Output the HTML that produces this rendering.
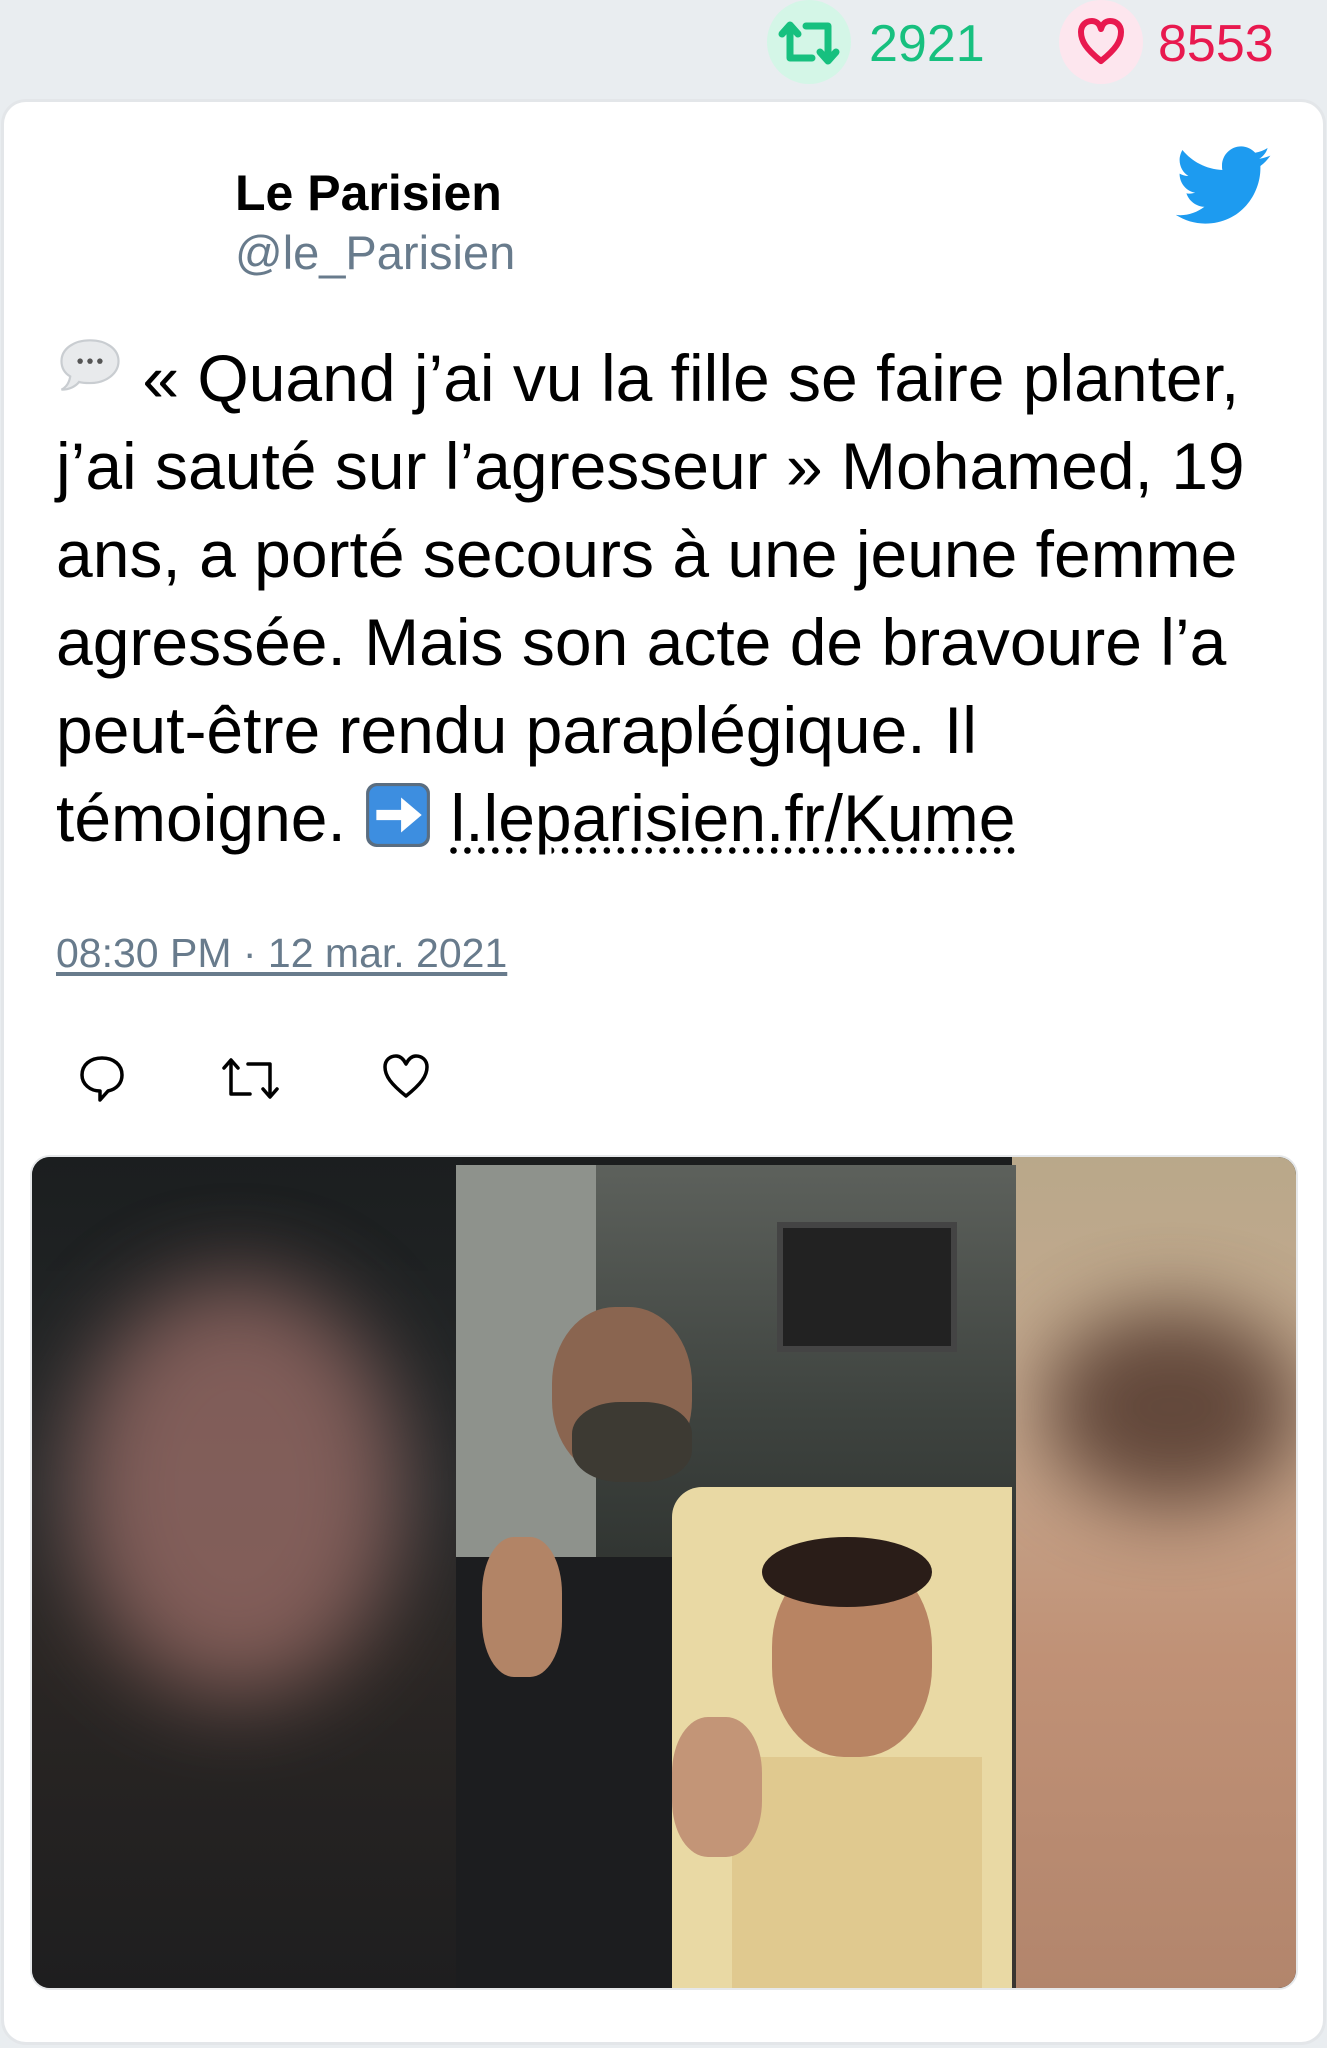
<!DOCTYPE html>
<html><head><meta charset="utf-8">
<style>
*{margin:0;padding:0;box-sizing:border-box}
html,body{width:1327px;height:2048px;overflow:hidden;background:#e9edf0;font-family:"Liberation Sans",Arial,sans-serif}
.top{position:absolute;top:0;left:0;width:1327px;height:100px}
.circ{position:absolute;width:84px;height:84px;border-radius:50%;top:0}
.num{position:absolute;top:14px;font-size:52px}
.card{position:absolute;left:4px;top:102px;width:1319px;height:1940px;background:#fff;border-radius:22px;box-shadow:0 0 0 3px #e3e6e9}
.handle{position:absolute;left:231px;font-size:47px;color:#687b8c}
.text{position:absolute;left:52px;width:1200px;font-size:66px;line-height:88px;color:#000}
.link{color:#000;text-decoration:underline dotted;text-underline-offset:6px}
.time{position:absolute;left:52px;font-size:41px;color:#687b8c;text-decoration:underline;text-underline-offset:5px}
.act{position:absolute}
.img{position:absolute;left:30px;top:1155px;width:1268px;height:835px;border-radius:20px;overflow:hidden;border:2px solid #e6e8ea;background:#1b1d1e}
</style></head><body>
<div class="top">
 <div class="circ" style="left:767px;background:#d4f6e7"></div>
 <svg style="position:absolute;left:778px;top:20px" width="62" height="46" viewBox="0 0 62 46"><g fill="none" stroke="#17c07f" stroke-width="7" stroke-linecap="round" stroke-linejoin="round"><path d="M4 14 L12 5 L20 14"/><path d="M12 6 V38 H34"/><path d="M28 6 H50 V38"/><path d="M42 32 L50 41 L58 32"/></g></svg>
 <div class="num" style="left:869px;color:#17c07f">2921</div>
 <div class="circ" style="left:1059px;background:#fde6ee"></div>
 <svg style="position:absolute;left:1076px;top:17px" width="50" height="50" viewBox="0 0 50 50"><path d="M25 44 C10 32 5 24 5 15 C5 8 10 4 16 4 C21 4 24 8 25 12 C26 8 29 4 34 4 C40 4 45 8 45 15 C45 24 40 32 25 44Z" fill="none" stroke="#e8194f" stroke-width="6" stroke-linejoin="round"/></svg>
 <div class="num" style="left:1158px;color:#e8194f">8553</div>
</div>
<div class="card">
 <div style="left:231px;top:62px;position:absolute;font-size:50px;font-weight:bold;color:#000">Le Parisien</div>
 <div class="handle" style="top:123px">@le_Parisien</div>
 <svg style="position:absolute;left:1172px;top:44px" width="96" height="80" viewBox="0 0 24 20"><path fill="#1d9bf0" d="M23.6 2.4c-.9.4-1.8.6-2.8.8 1-.6 1.8-1.6 2.1-2.7-.9.6-2 1-3.1 1.2C18.9.7 17.6.1 16.3.1c-2.7 0-4.8 2.2-4.8 4.8 0 .4 0 .8.1 1.1C7.5 5.8 4 3.9 1.6 1 1.2 1.7.9 2.6.9 3.5c0 1.7.9 3.2 2.2 4-.8 0-1.5-.2-2.2-.6v.1c0 2.3 1.7 4.3 3.9 4.7-.4.1-.8.2-1.3.2-.3 0-.6 0-.9-.1.6 1.9 2.4 3.3 4.5 3.4-1.7 1.3-3.8 2.1-6 2.1-.4 0-.8 0-1.2-.1 2.2 1.4 4.7 2.2 7.4 2.2 8.9 0 13.8-7.4 13.8-13.8v-.6c1-.7 1.8-1.6 2.5-2.6z"/></svg>
 <div class="text" style="top:232px"><svg width="68" height="68" viewBox="0 0 58 62" style="vertical-align:-4px"><path d="M29 3C14 3 3 11 3 22c0 6 3 11 8 14-1 6-4 10-8 12 7 0 13-3 16-7 3 1 6 1 10 1 15 0 26-9 26-20S44 3 29 3z" fill="#e8eaec" stroke="#c9cdd1" stroke-width="2"/><circle cx="20" cy="22" r="2.5" fill="#555"/><circle cx="29" cy="22" r="2.5" fill="#555"/><circle cx="38" cy="22" r="2.5" fill="#555"/></svg> « Quand j’ai vu la fille se faire planter, j’ai sauté sur l’agresseur » Mohamed, 19 ans, a porté secours à une jeune femme agressée. Mais son acte de bravoure l’a peut-être rendu paraplégique. Il témoigne. <svg width="68" height="68" viewBox="0 0 66 66" style="vertical-align:-8px"><rect x="2" y="2" width="62" height="62" rx="10" fill="#5a6d80"/><rect x="5" y="5" width="56" height="56" rx="8" fill="#3d8ee0"/><path d="M12 28h24V16l20 17-20 17V38H12z" fill="#fff"/></svg> <span class="link">l.leparisien.fr/Kume</span></div>
 <div class="time" style="top:828px">08:30 PM · 12 mar. 2021</div>
 <svg class="act" style="left:72px;top:950px" width="52" height="52" viewBox="0 0 52 52"><path d="M26 6C14 6 6 13 6 23c0 9 8 16 18 16l0 9 8-9c9-2 14-8 14-16C46 13 38 6 26 6z" fill="none" stroke="#000" stroke-width="3.5" stroke-linejoin="round"/></svg>
 <svg class="act" style="left:216px;top:954px" width="64" height="46" viewBox="0 0 64 46"><g fill="none" stroke="#000" stroke-width="3.5" stroke-linecap="round" stroke-linejoin="round"><path d="M4 12 L11 4 L18 12"/><path d="M11 5 V38 H30"/><path d="M28 8 H50 V40"/><path d="M43 33 L50 41 L57 33"/></g></svg>
 <svg class="act" style="left:376px;top:950px" width="52" height="50" viewBox="0 0 52 50"><path d="M26 44 C11 32 5 24 5 15 C5 8 10 4 16 4 C21 4 24 8 26 12 C28 8 31 4 36 4 C42 4 47 8 47 15 C47 24 41 32 26 44Z" fill="none" stroke="#000" stroke-width="3.5" stroke-linejoin="round"/></svg>
</div>
<div class="img">
 <div style="position:absolute;left:0;top:0;width:430px;height:835px;background:linear-gradient(180deg,#1b1e1f 0%,#26292a 40%,#2a2624 60%,#1e1e1f 100%)"></div>
 <div style="position:absolute;left:40px;top:120px;width:330px;height:420px;border-radius:50%;background:#a0706a;filter:blur(45px);opacity:.75"></div>
 <div style="position:absolute;left:980px;top:0;width:290px;height:835px;background:linear-gradient(180deg,#b9a88a 0%,#c6a98f 30%,#c09176 60%,#b2856c 100%)"></div>
 <div style="position:absolute;left:1010px;top:150px;width:260px;height:200px;border-radius:50%;background:#4a3026;filter:blur(40px);opacity:.8"></div>
 <div style="position:absolute;left:424px;top:8px;width:560px;height:827px;background:linear-gradient(180deg,#5d615c 0%,#3e433f 30%,#2c302d 55%,#3a3530 100%)"></div>
 <div style="position:absolute;left:424px;top:8px;width:140px;height:400px;background:#8e928c"></div>
 <div style="position:absolute;left:745px;top:65px;width:180px;height:130px;background:#222;border:6px solid #444"></div>
 <div style="position:absolute;left:424px;top:400px;width:250px;height:435px;background:#1c1d1f"></div>
 <div style="position:absolute;left:520px;top:150px;width:140px;height:170px;border-radius:45%;background:#8a6550"></div>
 <div style="position:absolute;left:540px;top:245px;width:120px;height:80px;border-radius:40%;background:#3d3a33"></div>
 <div style="position:absolute;left:640px;top:330px;width:340px;height:505px;background:#e9d9a4;border-radius:30px 0 0 0"></div>
 <div style="position:absolute;left:740px;top:400px;width:160px;height:200px;border-radius:45%;background:#b88463"></div>
 <div style="position:absolute;left:730px;top:380px;width:170px;height:70px;border-radius:50%;background:#2a1d18"></div>
 <div style="position:absolute;left:700px;top:600px;width:250px;height:235px;background:#e0c98f"></div>
 <div style="position:absolute;left:450px;top:380px;width:80px;height:140px;border-radius:40%;background:#b28466"></div>
 <div style="position:absolute;left:640px;top:560px;width:90px;height:140px;border-radius:40%;background:#c39577"></div>
</div>
</body></html>
